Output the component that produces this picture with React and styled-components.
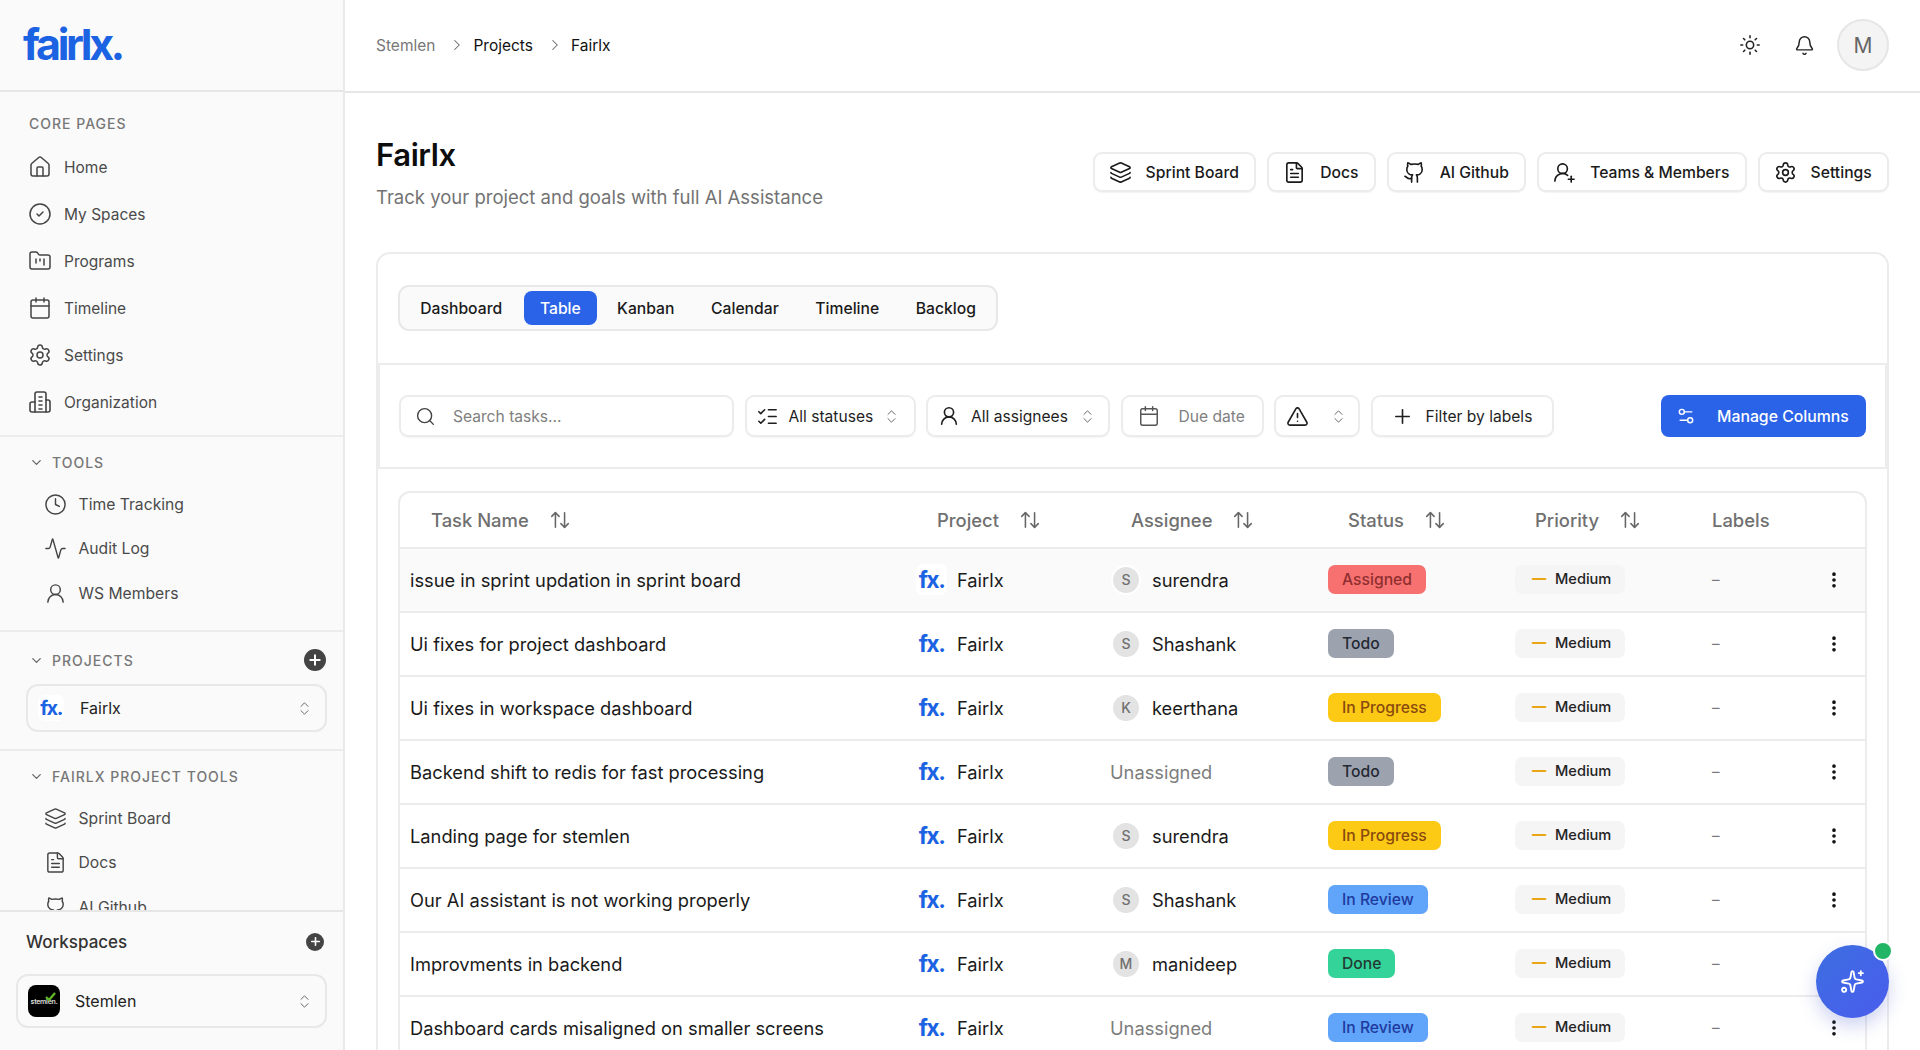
import React from "react";
import styled, { createGlobalStyle } from "styled-components";
import {
  House, CircleCheck, FolderKanban, Calendar, Settings, Clock, Activity, UserRound, Layers, FileText, Github,
  ChevronDown, ChevronRight, ChevronsUpDown, Plus, Search, ListChecks, TriangleAlert, Settings2, Sun, Bell,
  ArrowUpDown, EllipsisVertical, Sparkles, UserRoundPlus, Minus,
} from "lucide-react";

const Global = createGlobalStyle`
  * { box-sizing: border-box; }
  html, body { margin: 0; height: 100%; overflow: hidden; background: #fff; }
  body { font-family: Inter, "Liberation Sans", sans-serif; color: #111; -webkit-font-smoothing: antialiased; }
`;

const Page = styled.div`display: flex; width: 1920px; height: 1050px; overflow: hidden; position: relative;`;
const Sidebar = styled.aside`width: 345px; flex: none; display: flex; flex-direction: column; background: #fafafa; border-right: 2px solid #e9e9e9;`;
const LogoBar = styled.div`height: 92px; flex: none; padding: 16px 0 0 23px; border-bottom: 2px solid #e6e6e6;`;
const Logo = styled.div`font-size: 43px; line-height: 56px; font-weight: 700; letter-spacing: -3.3px; color: #1b63e2;`;
const SideScroll = styled.div`flex: 1; min-height: 0; overflow: hidden;`;
const Section = styled.section`padding: ${p => p.$pad}; border-bottom: ${p => (p.$last ? "none" : "2px solid #ececec")};`;
const Heading = styled.div`
  height: 20px; display: flex; align-items: center; gap: 8px; padding-left: ${p => p.$left || "29px"}; padding-right: 17px;
  margin-bottom: ${p => p.$mb || "0"};
  font-size: 14px; font-weight: 500; letter-spacing: 1px; color: #777; text-transform: uppercase;
  svg.chev { color: #666; }
`;
const HeadLabel = styled.span`flex: 1;`;
const RoundPlus = styled.span`
  width: ${p => p.$size}px; height: ${p => p.$size}px; border-radius: 50%; background: #444; color: #fff; flex: none;
  display: inline-flex; align-items: center; justify-content: center;
`;
const NavItem = styled.div`
  height: ${p => (p.$sub ? "44.5px" : "47px")}; display: flex; align-items: center; gap: ${p => (p.$sub ? "11.5px" : "12px")};
  padding-left: ${p => (p.$sub ? "44px" : "28px")};
  font-size: ${p => (p.$sub ? "15.7px" : "15.5px")}; color: #4a4a4a; font-weight: 400; white-space: nowrap;
  svg { flex: none; color: #444; }
`;
const Selector = styled.div`
  display: flex; align-items: center; height: ${p => p.$h}px; margin-left: ${p => p.$ml}px; width: ${p => p.$w}px;
  border: 2px solid #e8e8e8; border-radius: 12px; padding: 0 12px 0 ${p => p.$pl}px; gap: ${p => p.$gap}px;
  font-size: 16px; color: #222; background: #fafafa;
`;
const SelName = styled.span`flex: 1;`;
const FxBox = styled.span`
  width: ${p => p.$w || 26}px; height: ${p => p.$h || 26}px; display: inline-flex; align-items: center; justify-content: center; flex: none;
  background: ${p => (p.$plain ? "transparent" : "#fff")}; border-radius: 7px;
  font-size: ${p => p.$fs || 20}px; font-weight: 700; letter-spacing: -1.5px; color: #1b63e2;
`;
const StemBox = styled.span`
  width: 32px; height: 32px; background: #000; border-radius: 8px; flex: none; position: relative;
  display: inline-flex; align-items: center; justify-content: center;
  color: #ddd; font-size: 7px; font-weight: 600; letter-spacing: -0.3px;
`;
const Leaf = styled.svg`position: absolute; right: 4px; top: 7px;`;
const Footer = styled.div`flex: none; height: 140px; border-top: 2px solid #e6e6e6;`;
const FootHead = styled.div`display: flex; align-items: center; justify-content: space-between; padding: 17px 19px 0 26px; height: 42px; margin-bottom: 20px; font-size: 17px; font-weight: 500; color: #333;`;

const Main = styled.main`flex: 1; min-width: 0; display: flex; flex-direction: column; background: #fff;`;
const TopBar = styled.header`
  height: 93px; flex: none; display: flex; align-items: center; justify-content: space-between; padding: 0 31px 1px 31px;
  border-bottom: 2px solid #e6e6e6;
`;
const Crumbs = styled.nav`display: flex; align-items: center; gap: 10px; font-size: 15.5px; color: #111; font-weight: 400; svg { color: #666; margin: 0 -3px 0 3px; }`;
const Crumb = styled.span`color: ${p => (p.$muted ? "#777" : "#111")};`;
const TopIcons = styled.div`display: flex; align-items: center; gap: 0; color: #222;`;
const IconSlot = styled.span`display: inline-flex; width: ${p => p.$w}px; justify-content: center;`;
const Avatar = styled.span`
  width: 52px; height: 52px; border-radius: 50%; background: #f4f4f4; border: 2px solid #e6e6e6; color: #666;
  display: inline-flex; align-items: center; justify-content: center; font-size: 21px; margin-left: 5px;
`;
const Content = styled.div`flex: 1; min-height: 0; overflow: hidden; padding: 43px 31px 0 31px;`;
const TitleRow = styled.div`display: flex; align-items: center; justify-content: space-between; height: 74px;`;
const Title = styled.h1`margin: 0; font-size: 31px; line-height: 38px; font-weight: 600; color: #0d0d0d; letter-spacing: -0.4px;`;
const Sub = styled.p`margin: 10px 0 0; font-size: 18.5px; line-height: 26px; color: #737373;`;
const Actions = styled.div`display: flex; gap: 11px; margin-bottom: 2px;`;
const ActionBtn = styled.div`
  height: 40px; display: flex; align-items: center; gap: 14px; padding: 0 15.25px 0 14px; background: #fff; border: 2px solid #ececec; border-radius: 9px;
  font-size: 15.7px; font-weight: 500; color: #1a1a1a; box-shadow: 0 1px 1px rgba(0,0,0,.05); svg { flex: none; }
`;
const Card = styled.div`margin-top: 42px; border: 2px solid #ececec; border-bottom: none; border-radius: 14px 14px 0 0; height: 900px;`;
const TabZone = styled.div`padding: 31px 20px 32px;`;
const TabBar = styled.div`
  display: inline-flex; align-items: center; gap: 4px; height: 46px; padding: 0 4px; background: #fafafa; border: 2px solid #e8e8e8; border-radius: 11px;
`;
const Tab = styled.div`
  height: 34px; display: flex; align-items: center; padding: 0 ${p => (p.$active ? "16px" : "16.3px")}; margin-left: ${p => (p.$active ? "1.5px" : "0")}; border-radius: 8px;
  font-size: 15.7px; font-weight: 500; color: ${p => (p.$active ? "#fff" : "#1a1a1a")}; background: ${p => (p.$active ? "#2a63e8" : "transparent")};
`;
const FilterZone = styled.div`
  display: flex; align-items: center; height: 106px; padding: 0 19px 0 19px; gap: 10.5px; border: 2px solid #ececec;
`;
const Field = styled.div`
  height: 42px; width: ${p => p.$w}px; display: flex; align-items: center; gap: ${p => p.$gap || 12}px; padding: 0 ${p => p.$pr || 14}px 0 ${p => p.$pl || 13}px; flex: none;
  border: 2px solid #ececec; border-radius: 9px; background: #fff; box-shadow: 0 1px 1px rgba(0,0,0,.04);
  font-size: 15.6px; color: ${p => (p.$muted ? "#808080" : "#1f1f1f")}; white-space: nowrap; svg { flex: none; }
`;
const FieldText = styled.span`flex: 1;`;
const Manage = styled.div`
  margin-left: auto; height: 42px; width: 205px; display: flex; align-items: center; gap: 21px; padding-left: 15px; border-radius: 8px;
  background: #2a63e8; color: #fff; font-size: 15.8px; font-weight: 500; white-space: nowrap;
`;
const TableWrap = styled.div`margin: 21.5px 20px 0; border: 2px solid #ececec; border-bottom: none; border-radius: 12px 12px 0 0;`;
const cols = "519px 191px 218px 187px 197px 100px 50px";
const HeadRow = styled.div`display: grid; grid-template-columns: ${cols}; height: 56px; align-items: center; border-bottom: 2px solid #ececec;`;
const HeadCell = styled.div`display: flex; align-items: center; gap: ${p => p.$gap || 20}px; padding-left: ${p => p.$pl}px; font-size: 18.4px; font-weight: 500; color: #707070; svg { color: #666; }`;
const Row = styled.div`display: grid; grid-template-columns: ${cols}; height: 64px; align-items: center; border-bottom: 2px solid #ececec; background: ${p => (p.$hi ? "#fafafa" : "#fff")};`;
const TaskCell = styled.div`padding-left: 10px; font-size: 18.3px; color: #1a1a1a;`;
const ProjectCell = styled.div`display: flex; align-items: center; gap: 10px; font-size: 18.3px; color: #1a1a1a; margin-left: -3px;`;
const AssigneeCell = styled.div`display: flex; align-items: center; gap: 13px; font-size: 18.3px; color: ${p => (p.$none ? "#7d7d7d" : "#1a1a1a")}; padding-left: ${p => (p.$none ? "0" : "3px")};`;
const Initial = styled.span`
  width: 26px; height: 26px; border-radius: 50%; background: #e3e3e3; color: #707070; font-size: 14px; font-weight: 500; display: inline-flex; align-items: center; justify-content: center;
  box-shadow: ${p => (p.$ring ? "0 0 0 2px #fff" : "none")};
`;
const statusStyle = {
  Assigned: ["#f87171", "#8f2f2f"], Todo: ["#9ca3af", "#242a33"], "In Progress": ["#fcc914", "#8a4a10"], "In Review": ["#60a5fa", "#1e3a9e"], Done: ["#34d399", "#223a33"],
};
const Status = styled.span`
  display: inline-flex; align-items: center; height: 29px; padding: 0 14px; border-radius: 7px; font-size: 15.7px; font-weight: 500;
  background: ${p => statusStyle[p.$s][0]}; color: ${p => statusStyle[p.$s][1]};
`;
const Priority = styled.span`
  display: inline-flex; align-items: center; gap: 5px; height: 29px; width: 110px; padding-left: 13px; border-radius: 7px; background: #f5f5f5; font-size: 14.6px; font-weight: 500; color: #222;
  svg { color: #eaa714; flex: none; }
`;
const Dash = styled.div`font-size: 15px; color: #777;`;
const Kebab = styled.div`display: flex; padding-left: 12px; color: #111;`;
const Fab = styled.div`
  position: absolute; left: 1816px; top: 945px; width: 73px; height: 73px; border-radius: 50%; color: #fff;
  background: linear-gradient(135deg, #3d6ee2, #4a5cec); box-shadow: 0 8px 18px rgba(60,80,200,.25);
  display: flex; align-items: center; justify-content: center;
`;
const FabDot = styled.span`position: absolute; right: -4px; top: -4px; width: 20px; height: 20px; border-radius: 50%; background: #22b566; border: 2px solid #fff;`;

const OrgIcon = ({ size = 24 }) => (
  <svg width={size} height={size} viewBox="0 0 24 24" fill="none" stroke="currentColor" strokeWidth="1.6" strokeLinecap="round" strokeLinejoin="round">
    <path d="M7 22V4a2 2 0 0 1 2-2h7a2 2 0 0 1 2 2v18" />
    <path d="M7 12H4a2 2 0 0 0-2 2v6a2 2 0 0 0 2 2h16a2 2 0 0 0 2-2v-8a2 2 0 0 0-2-2h-2" />
    <path d="M11 7h3M11 11h3M11 15h3M11 19h3" />
  </svg>
);

const core = [[House, "Home"], [CircleCheck, "My Spaces"], [FolderKanban, "Programs"], [Calendar, "Timeline"], [Settings, "Settings"], [OrgIcon, "Organization"]];
const tools = [[Clock, "Time Tracking"], [Activity, "Audit Log"], [UserRound, "WS Members"]];
const ptools = [[Layers, "Sprint Board"], [FileText, "Docs"], [Github, "AI Github"]];
const actions = [[Layers, "Sprint Board"], [FileText, "Docs"], [Github, "AI Github"], [UserRoundPlus, "Teams & Members"], [Settings, "Settings"]];
const tabs = ["Dashboard", "Table", "Kanban", "Calendar", "Timeline", "Backlog"];
const rows = [
  ["issue in sprint updation in sprint board", "surendra", "Assigned"],
  ["Ui fixes for project dashboard", "Shashank", "Todo"],
  ["Ui fixes in workspace dashboard", "keerthana", "In Progress"],
  ["Backend shift to redis for fast processing", null, "Todo"],
  ["Landing page for stemlen", "surendra", "In Progress"],
  ["Our AI assistant is not working properly", "Shashank", "In Review"],
  ["Improvments in backend", "manideep", "Done"],
  ["Dashboard cards misaligned on smaller screens", null, "In Review"],
];
const heads = [["Task Name", 31, 20], ["Project", 18, 20], ["Assignee", 21, 20], ["Status", 20, 20], ["Priority", 20, 20]];

const Nav = ({ items, sub }) => items.map(([I, t]) => (
  <NavItem key={t} $sub={sub}><I size={sub ? 23 : 24} strokeWidth={1.5} />{t}</NavItem>
));

export default function App() {
  return (
    <Page>
      <Global />
      <Sidebar>
        <LogoBar><Logo>fairlx.</Logo></LogoBar>
        <SideScroll>
          <Section $pad="21px 0 9.5px">
            <Heading $mb="10.5px">Core Pages</Heading>
            <Nav items={core} />
          </Section>
          <Section $pad="15px 0 15px">
            <Heading $mb="9.75px"><ChevronDown className="chev" size={15} />Tools</Heading>
            <Nav items={tools} sub />
          </Section>
          <Section $pad="18px 0 17px">
            <Heading $mb="14px">
              <ChevronDown className="chev" size={15} /><HeadLabel>Projects</HeadLabel>
              <RoundPlus $size={22}><Plus size={16} strokeWidth={3} /></RoundPlus>
            </Heading>
            <Selector $h={48} $ml={26} $w={301} $pl={10} $gap={16}>
              <FxBox>fx.</FxBox><SelName>Fairlx</SelName><ChevronsUpDown size={17} color="#666" strokeWidth={1.4} />
            </Selector>
          </Section>
          <Section $pad="15.5px 0 0" $last>
            <Heading $mb="9.25px"><ChevronDown className="chev" size={15} />Fairlx Project Tools</Heading>
            <Nav items={ptools} sub />
          </Section>
        </SideScroll>
        <Footer>
          <FootHead>Workspaces<RoundPlus $size={18}><Plus size={13} strokeWidth={3} /></RoundPlus></FootHead>
          <Selector $h={54} $ml={16} $w={311} $pl={10} $gap={15}>
            <StemBox>stemlen.
              <Leaf width="11" height="9" viewBox="0 0 11 9"><path d="M1 5l3 3 6-7" stroke="#5fb526" strokeWidth="2.4" fill="none" /></Leaf>
            </StemBox>
            <SelName>Stemlen</SelName><ChevronsUpDown size={17} color="#666" strokeWidth={1.4} />
          </Selector>
        </Footer>
      </Sidebar>
      <Main>
        <TopBar>
          <Crumbs>
            <Crumb $muted>Stemlen</Crumb><ChevronRight size={18} strokeWidth={1.4} />
            <Crumb>Projects</Crumb><ChevronRight size={18} strokeWidth={1.4} />
            <Crumb>Fairlx</Crumb>
          </Crumbs>
          <TopIcons>
            <IconSlot $w={55}><Sun size={22} strokeWidth={1.7} /></IconSlot>
            <IconSlot $w={55}><Bell size={21} strokeWidth={1.7} /></IconSlot>
            <Avatar>M</Avatar>
          </TopIcons>
        </TopBar>
        <Content>
          <TitleRow>
            <div>
              <Title>Fairlx</Title>
              <Sub>Track your project and goals with full AI Assistance</Sub>
            </div>
            <Actions>
              {actions.map(([I, t]) => <ActionBtn key={t}><I size={23} strokeWidth={1.7} />{t}</ActionBtn>)}
            </Actions>
          </TitleRow>
          <Card>
            <TabZone>
              <TabBar>{tabs.map(t => <Tab key={t} $active={t === "Table"}>{t}</Tab>)}</TabBar>
            </TabZone>
            <FilterZone>
              <Field $w={335} $muted $gap={17} $pl={14}><Search size={21} strokeWidth={1.6} color="#444" />Search tasks...</Field>
              <Field $w={171} $gap={10} $pl={9} $pr={15}><ListChecks size={23} strokeWidth={1.7} /><FieldText>All statuses</FieldText><ChevronsUpDown size={17} color="#666" strokeWidth={1.4} /></Field>
              <Field $w={184} $gap={11} $pl={10} $pr={15}><UserRound size={22} strokeWidth={1.8} /><FieldText>All assignees</FieldText><ChevronsUpDown size={17} color="#666" strokeWidth={1.4} /></Field>
              <Field $w={143} $muted $gap={19} $pl={15}><Calendar size={22} strokeWidth={1.6} color="#555" />Due date</Field>
              <Field $w={86} $gap={21} $pl={10} $pr={4}><TriangleAlert size={23} strokeWidth={1.7} /><ChevronsUpDown size={17} color="#666" strokeWidth={1.4} /></Field>
              <Field $w={183} $pl={18} $gap={12}><Plus size={23} strokeWidth={1.7} />Filter by labels</Field>
              <Manage><Settings2 size={20} strokeWidth={1.7} />Manage Columns</Manage>
            </FilterZone>
            <TableWrap>
              <HeadRow>
                {heads.map(([t, pl, g]) => <HeadCell key={t} $pl={pl} $gap={g}>{t}<ArrowUpDown size={22} strokeWidth={1.7} /></HeadCell>)}
                <HeadCell $pl={0}>Labels</HeadCell>
                <div />
              </HeadRow>
              {rows.map(([task, who, st], i) => (
                <Row key={task} $hi={i === 0}>
                  <TaskCell>{task}</TaskCell>
                  <ProjectCell><FxBox $plain={i > 0} $w={31} $h={31} $fs={23}>fx.</FxBox>Fairlx</ProjectCell>
                  {who ? (
                    <AssigneeCell><Initial $ring={i === 0}>{who[0].toUpperCase()}</Initial>{who}</AssigneeCell>
                  ) : <AssigneeCell $none>Unassigned</AssigneeCell>}
                  <div><Status $s={st}>{st}</Status></div>
                  <div><Priority><Minus size={22} strokeWidth={2} />Medium</Priority></div>
                  <Dash>–</Dash>
                  <Kebab><EllipsisVertical size={20} strokeWidth={2.4} /></Kebab>
                </Row>
              ))}
            </TableWrap>
          </Card>
        </Content>
      </Main>
      <Fab><Sparkles size={25} strokeWidth={1.8} /><FabDot /></Fab>
    </Page>
  );
}
